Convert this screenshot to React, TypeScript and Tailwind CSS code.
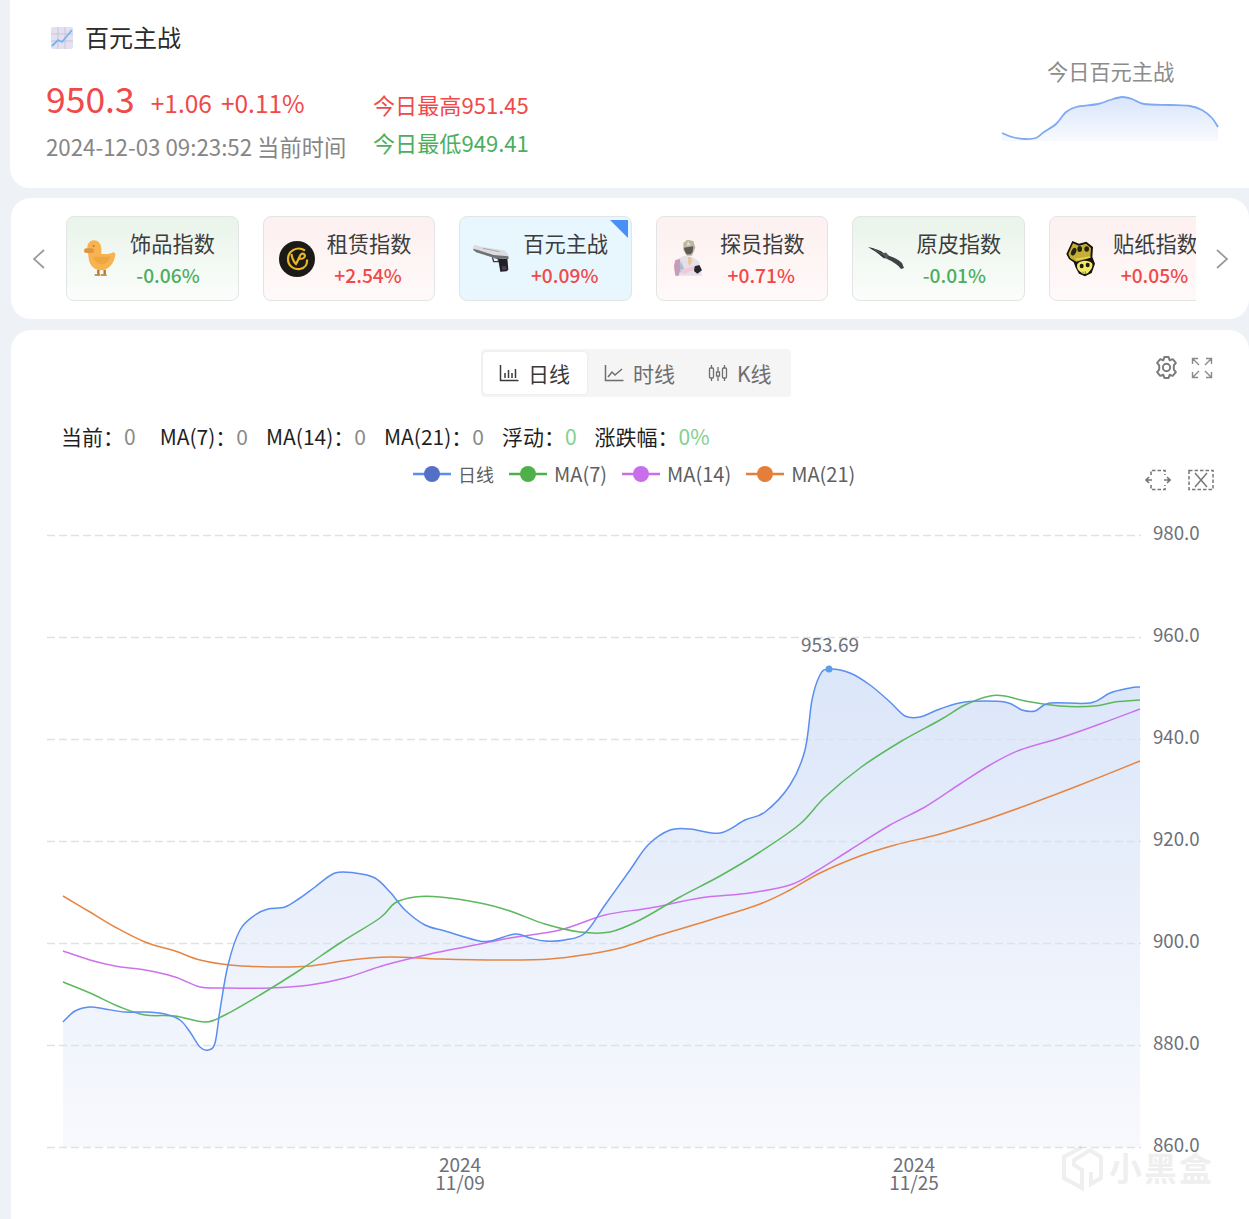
import React from "react";

const FONT = { fontFamily: '"Noto Sans CJK SC", "Noto Sans", sans-serif' };

type P = [number, number];
function smooth(pts: P[]): string {
  let d = `M${pts[0][0]} ${pts[0][1]}`;
  for (let i = 0; i < pts.length - 1; i++) {
    const p0 = pts[Math.max(i - 1, 0)];
    const p1 = pts[i];
    const p2 = pts[i + 1];
    const p3 = pts[Math.min(i + 2, pts.length - 1)];
    const c1x = p1[0] + (p2[0] - p0[0]) / 6;
    const c1y = p1[1] + (p2[1] - p0[1]) / 6;
    const c2x = p2[0] - (p3[0] - p1[0]) / 6;
    const c2y = p2[1] - (p3[1] - p1[1]) / 6;
    d += ` C${c1x.toFixed(1)} ${c1y.toFixed(1)} ${c2x.toFixed(1)} ${c2y.toFixed(1)} ${p2[0]} ${p2[1]}`;
  }
  return d;
}

const blue: P[] = [[63,1022],[75,1011],[90,1007],[105,1009],[125,1012],[145,1012],[165,1014],[180,1020],[190,1032],[200,1047],[208,1050],[215,1043],[220,1010],[228,965],[240,930],[255,915],[268,909],[285,907],[300,898],[315,887],[335,873],[355,873],[375,878],[390,892],[405,910],[425,925],[445,931],[475,940],[490,941],[515,934],[530,938],[545,941],[565,940],[585,933],[605,905],[630,870],[648,845],[670,830],[690,829],[720,833],[745,820],[765,812],[790,785],[805,750],[812,700],[820,675],[829,669],[850,673],[870,685],[890,702],[905,716],[920,717],[940,709],[965,702],[1005,702],[1022,710],[1035,711],[1050,703],[1090,703],[1110,693],[1130,688],[1140,687]];
const green: P[] = [[63,982],[90,993],[120,1007],[145,1015],[175,1016],[205,1022],[225,1015],[260,995],[300,970],[340,943],[380,918],[395,903],[415,897],[440,897],[480,903],[510,911],[545,924],[580,932],[610,932],[640,920],[680,897],[720,876],[760,852],[800,824],[825,797],[860,768],[900,742],[940,720],[965,705],[990,696],[1005,696],[1025,701],[1060,706],[1095,706],[1115,702],[1140,700]];
const purple: P[] = [[63,951],[90,960],[115,966],[145,970],[175,977],[200,987],[225,988],[270,988],[310,985],[345,978],[385,965],[430,954],[470,946],[510,938],[560,930],[605,915],[650,908],[700,898],[750,893],[790,885],[815,872],[850,850],[890,825],[925,807],[960,784],[990,765],[1020,750],[1060,738],[1100,724],[1140,709]];
const orange: P[] = [[63,896],[90,912],[115,927],[145,942],[175,951],[200,960],[230,965],[270,967],[310,966],[350,960],[390,957],[440,959],[500,960],[550,959],[590,954],[620,948],[660,935],[710,920],[760,904],[790,890],[820,873],[860,856],[895,845],[940,834],[985,820],[1030,804],[1080,785],[1140,761]];
const spark: P[] = [[1002,133],[1012,137],[1024,139],[1036,138],[1044,132],[1056,124],[1066,112],[1076,107],[1098,104],[1110,100],[1122,97],[1132,99],[1144,104],[1170,105],[1190,106],[1202,110],[1212,118],[1218,127]];

function Duck() {
  return (
    <svg width="60" height="60" viewBox="0 0 180 180" className="shrink-0">
      <path d="M85 122V136M104 122V136" stroke="#b5752a" strokeWidth="7" />
      <path d="M74 138H90M92 138H110" stroke="#b5752a" strokeWidth="5" />
      <path d="M52 55 C52 42 62 34 72 34 C84 34 93 44 94 58 L94 75 C108 76 122 75 130 70 L136 73 C136 88 130 102 120 112 C112 120 104 124 92 124 C72 124 58 108 56 88 Z" fill="#f6b350" />
      <rect x="42" y="58" width="30" height="14" rx="7" fill="#e0963f" />
      <path d="M70 83 H120 C118 96 106 106 95 106 C84 106 72 96 70 83Z" fill="#eea640" />
      <circle cx="71" cy="51" r="2.500" fill="#7a5a28" />
    </svg>
  );
}
function Coin() {
  return (
    <svg width="36" height="36" viewBox="0 0 36 36" className="shrink-0">
      <circle cx="18" cy="18" r="18" fill="#1c1a17" />
      <path d="M26 9.500 C18 4.500 9 10 9 18 C9 25 15 29 21 28 C26 27 28.500 23 28 18.500" fill="none" stroke="#e8b624" strokeWidth="2.200" />
      <path d="M12.500 13 C13 17 15 21 17 23 C19 20 20 16 22 13 M22 13 C26 11.500 27.500 16 23.500 17.500 L20 18" fill="none" stroke="#e8b624" strokeWidth="2.200" />
    </svg>
  );
}
function Gun() {
  return (
    <svg width="60" height="60" viewBox="0 0 180 180" className="shrink-0">
      <path d="M105 88 L133 88 L136 122 L131 127 L112 128 Z" fill="#1f1f24" />
      <path d="M116 112 L130 112 L131 122 L118 124Z" fill="#4a3a5a" />
      <path d="M88 84 L106 88 L106 98 L92 98 Z" fill="none" stroke="#3c3c40" strokeWidth="4" />
      <path d="M30 56 L34 47 L62 55 L124 64 L135 74 L137 90 L92 86 L40 70 L30 62Z" fill="#dcdce0" />
      <path d="M32 60 L42 62 L92 78 L136 82 L137 90 L92 86 L40 70 L30 62Z" fill="#6f7074" />
      <path d="M60 58 L110 68" stroke="#a8a8ae" strokeWidth="3" />
    </svg>
  );
}
function Agent() {
  return (
    <svg width="60" height="60" viewBox="0 0 180 180" className="shrink-0">
      <path d="M46 92 L75 80 L96 84 L118 98 L126 140 L46 140 L42 112Z" fill="#e7dfe8" />
      <path d="M46 94 L60 90 L62 118 L56 140 L46 140 L42 112Z" fill="#c79cb4" />
      <path d="M62 96 L72 118 L60 132Z" fill="#9fc2d9" />
      <path d="M84 84 L94 84 L96 100 L88 112 L84 100Z" fill="#e9c7a0" />
      <path d="M60 124 L100 112 L106 120 L72 136Z" fill="#f2c8d6" />
      <path d="M104 112 L118 108 L126 124 L112 134 L102 126Z" fill="#26262c" />
      <path d="M70 42 L82 32 L100 36 L106 56 L96 80 L80 80 L70 62Z" fill="#bdb6a0" />
      <path d="M72 56 L100 52 L98 68 L92 76 L80 76 L74 66Z" fill="#5d5a56" />
      <path d="M84 36 L92 48 L80 50Z" fill="#e2ddcc" />
    </svg>
  );
}
function Knife() {
  return (
    <svg width="38" height="26" viewBox="0 0 38 26" className="shrink-0">
      <path d="M1 1 C7 2 13 4 18 8 L20 11 L17 12.500 C12 8 7 4.500 1 1Z" fill="#2f3336" />
      <path d="M15 7.500 L19 6.500 L23 11 L19 13Z" fill="#55595c" />
      <path d="M21 9.500 C27 11 32 14 35 17 L37 22 L34 23 C31 19 26 15.500 20 13Z" fill="#3f4244" />
      <path d="M7 3.500 L16 8.500" stroke="#6c7478" strokeWidth="0.800" />
    </svg>
  );
}
function Skull() {
  return (
    <svg width="60" height="60" viewBox="0 0 180 180" className="shrink-0">
      <path d="M40 75 L58 36 L78 44 L100 38 L120 54 L118 84 L126 104 L116 132 L96 142 L78 134 L68 116 L62 100 L48 90Z" fill="#14140c" />
      <path d="M46 75 L60 43 L78 50 L99 44 L114 57 L112 86 L70 98 L52 88Z" fill="#c4ae38" />
      <ellipse cx="62" cy="68" rx="7" ry="12" transform="rotate(25 62 68)" fill="#26230f" />
      <ellipse cx="80" cy="60" rx="7" ry="9" fill="#26230f" />
      <ellipse cx="101" cy="60" rx="7" ry="8" fill="#26230f" />
      <path d="M68 92 L112 84" stroke="#e5d24e" strokeWidth="5" />
      <path d="M72 108 C76 94 108 90 118 104 C120 116 112 124 108 128 C104 136 88 137 84 130 C76 126 71 118 72 108Z" fill="#f1e868" />
      <ellipse cx="86" cy="111" rx="6" ry="7" fill="#1f1c0c" />
      <ellipse cx="104" cy="108" rx="6" ry="7" fill="#1f1c0c" />
      <path d="M90 128V134M97 127V134" stroke="#4a4418" strokeWidth="2" />
    </svg>
  );
}

type Card = { name: string; pct: string; up: boolean; active?: boolean; icon: React.ReactNode };
const cards: Card[] = [
  { name: "饰品指数", pct: "-0.06%", up: false, icon: <Duck /> },
  { name: "租赁指数", pct: "+2.54%", up: true, icon: <Coin /> },
  { name: "百元主战", pct: "+0.09%", up: true, active: true, icon: <Gun /> },
  { name: "探员指数", pct: "+0.71%", up: true, icon: <Agent /> },
  { name: "原皮指数", pct: "-0.01%", up: false, icon: <Knife /> },
  { name: "贴纸指数", pct: "+0.05%", up: true, icon: <Skull /> },
];

function IndexCard({ c }: { c: Card }) {
  const bg = c.active
    ? "bg-[#e8f6fe]"
    : c.up
      ? "bg-gradient-to-b from-[#fdf0f0] to-[#fff9f9]"
      : "bg-gradient-to-b from-[#e9f4ea] to-[#fbfdfb]";
  return (
    <div className={`relative shrink-0 w-[172.6px] h-[85px] rounded-lg border border-[#e2e4e6] overflow-hidden ${bg} flex items-center pl-[13px]`}>
      <div className="w-[40px] h-[40px] flex items-center justify-center shrink-0">{c.icon}</div>
      <div className="ml-[10px] flex flex-col items-center w-[85px] pt-[1px]">
        <div className="text-[21.2px] leading-[28px] text-[#3c3c3c] whitespace-nowrap -mt-[1px]">{c.name}</div>
        <div className={`text-[19.2px] leading-[26px] mt-[5px] font-medium whitespace-nowrap ${c.up ? "text-[#f0494a] mr-[2px]" : "text-[#4cae5e] mr-[9px]"}`}>{c.pct}</div>
      </div>
      {c.active && <div className="absolute top-0 right-0 w-0 h-0 border-l-[18px] border-l-transparent border-t-[18px] border-t-[#4a8ff5] mr-[3px] mt-[3px]" />}
    </div>
  );
}

function Tab({ label, active, icon }: { label: string; active?: boolean; icon: React.ReactNode }) {
  return (
    <div className={`h-[42px] flex items-center text-[21px] ${active ? "bg-white rounded shadow-[0_0_3px_rgba(0,0,0,0.08)] text-[#3a3a3a] w-[104px] pl-[16px] gap-[9px]" : "text-[#6e6e6e] pl-[17px] pr-[16px] gap-[9px]"}`}>
      {icon}
      <span className="mt-[2px]">{label}</span>
    </div>
  );
}

const stats: [string, string, string, string][] = [
  ["当前：", "0", "text-[#8a8a8a]", "mr-[24px]"],
  ["MA(7)：", "0", "text-[#8a8a8a]", "mr-[18px]"],
  ["MA(14)：", "0", "text-[#8a8a8a]", "mr-[18px]"],
  ["MA(21)：", "0", "text-[#8a8a8a]", "mr-[18px]"],
  ["浮动：", "0", "text-[#7fd08e]", "mr-[18px]"],
  ["涨跌幅：", "0%", "text-[#7fd08e]", ""],
];

const legend: [string, string, string][] = [
  ["日线", "#5470c6", "#5a8ef0"],
  ["MA(7)", "#4fb04a", "#4fb04a"],
  ["MA(14)", "#c96eea", "#c96eea"],
  ["MA(21)", "#e67e3b", "#e67e3b"],
];

export default function App() {
  const gridY = [535.5, 637.5, 739.5, 841.5, 943.5, 1045.5, 1147.5];
  const labels = ["980.0", "960.0", "940.0", "920.0", "900.0", "880.0", "860.0"];
  return (
    <div style={FONT} className="w-[1249px] h-[1219px] bg-[#eef1f6] overflow-hidden flex flex-col pl-[10px]">
      {/* header card */}
      <div className="h-[188px] shrink-0 bg-white rounded-bl-[20px] pl-[36px] pt-[19px] flex justify-between">
        <div>
          <div className="flex items-center h-[36px]">
            <svg width="26" height="26" viewBox="0 0 26 26" className="ml-[3px] mt-[2px]">
              <rect x="2" y="2" width="22" height="22" rx="2" fill="#e4e0f0" />
              <path d="M2 9h22M2 16h22M9 2v22M16 2v22" stroke="#c9c3dc" strokeWidth="1" />
              <path d="M3 21 L9 15 L13 17 L23 5" fill="none" stroke="#72b4ee" strokeWidth="1.800" />
            </svg>
            <span className="ml-[10px] text-[24px] leading-[36px] text-[#2a2a2a]">百元主战</span>
          </div>
          <div className="flex mt-[18px]">
            <div className="w-[327px]">
              <div className="flex items-baseline h-[50px] text-[#f0494a]">
                <span className="text-[35.500px] leading-[50px]">950.3</span>
                <span className="ml-[16px] text-[24.500px] leading-[50px]">+1.06</span>
                <span className="ml-[9px] text-[24.500px] leading-[50px]">+0.11%</span>
              </div>
              <div className="text-[22.300px] leading-[36px] text-[#868686] whitespace-nowrap mt-[5px]">2024-12-03 09:23:52 当前时间</div>
            </div>
            <div className="text-[22.100px] leading-[38px] pt-[12px] whitespace-nowrap">
              <div className="text-[#f0494a]">今日最高951.45</div>
              <div className="text-[#4cae5e]">今日最低949.41</div>
            </div>
          </div>
        </div>
        <div className="w-[248px] shrink-0 pt-[32px] flex flex-col">
          <div className="text-[21.200px] leading-[40px] text-[#8c8c8c] pl-[46px]">今日百元主战</div>
          <svg width="248" height="50" viewBox="1001 92 248 50" className="mt-[1px]">
            <defs>
              <linearGradient id="sparkfill" x1="0" y1="0" x2="0" y2="1">
                <stop offset="0" stopColor="#d9e5fb" />
                <stop offset="1" stopColor="#f8fafe" />
              </linearGradient>
            </defs>
            <path d={`${smooth(spark)} L1218 141 L1002 141Z`} fill="url(#sparkfill)" />
            <path d={smooth(spark)} fill="none" stroke="#7fa9f3" strokeWidth="1.800" />
          </svg>
        </div>
      </div>

      {/* carousel card */}
      <div className="h-[121px] mt-[10px] ml-[1px] shrink-0 bg-white rounded-[20px] flex items-center">
        <svg width="16" height="22" viewBox="0 0 16 22" className="ml-[20px] mr-[19px] shrink-0">
          <path d="M13 2 L3 11 L13 20" fill="none" stroke="#9a9a9a" strokeWidth="1.700" />
        </svg>
        <div className="w-[1130px] shrink-0 overflow-hidden flex gap-[24px]">
          {cards.map((c) => (
            <IndexCard key={c.name} c={c} />
          ))}
        </div>
        <svg width="16" height="22" viewBox="0 0 16 22" className="ml-[18px] shrink-0">
          <path d="M3 2 L13 11 L3 20" fill="none" stroke="#9a9a9a" strokeWidth="1.700" />
        </svg>
      </div>

      {/* chart card */}
      <div className="relative flex-1 mt-[11px] ml-[1px] bg-white rounded-tl-[20px] rounded-tr-[20px] overflow-hidden">
        <div className="flex justify-center pt-[19px] pl-[12px]">
          <div className="flex bg-[#f5f5f5] rounded pl-[2px] w-[310px] h-[48px] items-center">
            <Tab
              active
              label="日线"
              icon={
                <svg width="20" height="18" viewBox="0 0 20 18">
                  <path d="M1.500 1v15.500h18" fill="none" stroke="currentColor" strokeWidth="1.500" />
                  <path d="M6 14V9M9.500 14V6M13 14V9M16.500 14V5" stroke="currentColor" strokeWidth="1.500" />
                </svg>
              }
            />
            <Tab
              label="时线"
              icon={
                <svg width="20" height="18" viewBox="0 0 20 18">
                  <path d="M1.500 1v15.500h18" fill="none" stroke="currentColor" strokeWidth="1.500" />
                  <path d="M4 13 L8 8 L11 11 L18 5" fill="none" stroke="currentColor" strokeWidth="1.500" />
                </svg>
              }
            />
            <Tab
              label="K线"
              icon={
                <svg width="20" height="18" viewBox="0 0 20 18">
                  <path d="M3.500 1v16M10 3v14M16.500 1v16" stroke="currentColor" strokeWidth="1.300" />
                  <rect x="1.500" y="4" width="4" height="10" rx="1" fill="#f5f5f5" stroke="currentColor" strokeWidth="1.300" />
                  <rect x="8.500" y="8" width="3" height="4" fill="#f5f5f5" stroke="currentColor" strokeWidth="1.300" />
                  <rect x="14.500" y="4" width="4" height="10" rx="1" fill="#f5f5f5" stroke="currentColor" strokeWidth="1.300" />
                </svg>
              }
            />
          </div>
        </div>

        <div className="absolute top-[25px] right-[36px] flex items-center gap-[12px]">
          <svg width="25" height="25" viewBox="0 0 24 24" fill="none" stroke="#7b7b7b" strokeWidth="1.900" strokeLinejoin="round">
            <path d="M10 2 H14 L15 5 L18 4 L21 7.500 L19 10 V14 L21 16.500 L18 20 L15 19 L14 22 H10 L9 19 L6 20 L3 16.500 L5 14 V10 L3 7.500 L6 4 L9 5Z" />
            <circle cx="12" cy="12" r="3.500" />
          </svg>
          <svg width="22" height="22" viewBox="0 0 22 22" fill="none" stroke="#8a8a8a" strokeWidth="1.400">
            <path d="M1.500 7V1.500H7M1.500 1.500L8 8M15 1.500H20.500V7M20.500 1.500L14 8M1.500 15V20.500H7M1.500 20.500L8 14M15 20.500H20.500V15M20.500 20.500L14 14" />
          </svg>
        </div>

        <div className="flex pl-[50px] mt-[24px] text-[21px] leading-[30px] text-[#1f1f1f] whitespace-nowrap">
          {stats.map(([k, v, cls, m]) => (
            <div key={k} className={m}>
              {k}
              <span className={cls}>{v}</span>
            </div>
          ))}
        </div>

        <div className="flex items-center pl-[402px] mt-[11px] h-[24px] text-[20px] text-[#5f5f5f] whitespace-nowrap">
          {legend.map(([name, c, line], i) => (
            <div key={name} className={`flex items-center ${i ? "ml-[15px]" : ""}`}>
              <svg width="38" height="18" viewBox="0 0 38 18">
                <path d="M0 9H38" stroke={line} strokeWidth="2.500" />
                <circle cx="19" cy="9" r="8" fill={c} />
              </svg>
              <span className={i ? "ml-[7px]" : "ml-[7px] text-[18px]"}>{name}</span>
            </div>
          ))}
        </div>

        <div className="absolute top-[139px] right-[35px] flex items-center gap-[17px]">
          <svg width="26" height="22" viewBox="0 0 26 22" fill="none" stroke="#777" strokeWidth="1.600">
            <path d="M6 6V1.500H20V6M6 16V20.500H20V16" strokeDasharray="3.500 2" />
            <path d="M1 11H7M4 8L1 11L4 14M25 11H19M22 8L25 11L22 14" />
          </svg>
          <svg width="26" height="22" viewBox="0 0 26 22" fill="none" stroke="#777" strokeWidth="1.500">
            <rect x="1" y="1.500" width="24" height="19" strokeDasharray="3.500 2" />
            <path d="M7 4L19 18M19 4L7 18" />
          </svg>
        </div>

        <svg width="1238" height="705" viewBox="11 514 1238 705" className="block mt-[28px]">
          <defs>
            <linearGradient id="areafill" gradientUnits="userSpaceOnUse" x1="0" y1="669" x2="0" y2="1147">
              <stop offset="0" stopColor="#dbe6f9" />
              <stop offset="1" stopColor="#f8f9fd" />
            </linearGradient>
          </defs>
          <path d={`${smooth(blue)} L1140 1147 L63 1147Z`} fill="url(#areafill)" />
          {gridY.map((y, i) => (
            <g key={y}>
              <path d={`M47 ${y}H1141`} stroke="#dce1ec" strokeWidth="1.500" strokeDasharray="8 4" />
              <text x="1153" y={y + 4} fontSize="18.700" fill="#6e7079">{labels[i]}</text>
            </g>
          ))}
          <path d={smooth(orange)} fill="none" stroke="#e68542" strokeWidth="1.500" />
          <path d={smooth(purple)} fill="none" stroke="#cc73ec" strokeWidth="1.500" />
          <path d={smooth(green)} fill="none" stroke="#5cb85c" strokeWidth="1.500" />
          <path d={smooth(blue)} fill="none" stroke="#5a8ef0" strokeWidth="1.500" />
          <circle cx="829" cy="669" r="3.500" fill="#5aa0e8" />
          <text x="830" y="652" fontSize="19" fill="#6e7079" textAnchor="middle">953.69</text>
          <g fontSize="19" fill="#6e7079" textAnchor="middle">
            <text x="460" y="1172">2024</text>
            <text x="460" y="1190">11/09</text>
            <text x="914" y="1172">2024</text>
            <text x="914" y="1190">11/25</text>
          </g>
          <g opacity="0.13">
            <path d="M1082 1147 L1064 1157 V1178 L1082 1188 V1170 L1074 1165 V1160 L1090 1150 L1101 1157 V1178 L1091 1184 V1172" fill="none" stroke="#8a8a8a" strokeWidth="4" />
            <text x="1109" y="1181" fontSize="33" fill="#8a8a8a" fontWeight="700" letterSpacing="2">小黑盒</text>
          </g>
        </svg>
      </div>
    </div>
  );
}
